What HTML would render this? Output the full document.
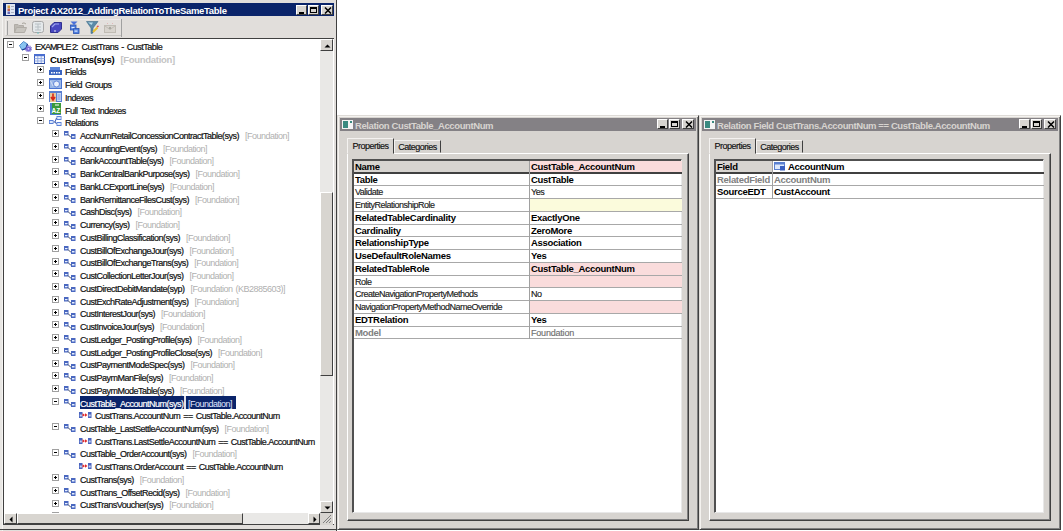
<!DOCTYPE html>
<html><head><meta charset="utf-8"><style>
*{margin:0;padding:0;box-sizing:border-box}
html,body{width:1063px;height:531px;overflow:hidden;background:#fff;position:relative;font-family:"Liberation Sans",sans-serif}
div,i{position:absolute}
i{display:block}
.lw{left:0;top:0;width:337px;height:531px;background:#e1dedb;border-right:1px solid #404040}
.lwl{left:0;top:0;width:3px;height:531px;background:#e8e6e3;box-shadow:inset -1px 0 0 #f4f3f1}
.lttl{left:3px;top:3px;width:331px;height:13px;background:#0a246a}
.lttxt{left:18px;top:3.5px;height:13px;line-height:13px;font-weight:bold;font-size:9.5px;letter-spacing:-0.3px;color:#fff;white-space:nowrap}
.tb{width:12px;height:10px;background:#d7d4d0;border:1px solid;border-color:#fff #404040 #404040 #fff}
.tbar{left:5px;top:19px;width:117px;height:17px;border:1px solid;border-color:#eeecea #b8b6b2 #c8c6c2 #eeecea;background:#e3e0dd}
.tree{left:3px;top:38px;width:331px;height:487px;background:#fff;border-left:1px solid #404040;border-top:1px solid #404040;border-bottom:1px solid #404040}
.tt{margin-top:1px;height:13px;line-height:13px;font-size:9px;letter-spacing:-0.5px;word-spacing:1px;color:#101010;-webkit-text-stroke:0.2px #101010;white-space:nowrap}
.tt.b{margin-top:0;font-size:9.5px;font-weight:bold;letter-spacing:-0.3px;color:#000;-webkit-text-stroke:0}
.tt.b .sf{font-weight:bold;letter-spacing:-0.3px;color:#c4c4c4}
.tt .sf{color:#b0b0b0;-webkit-text-stroke:0;font-weight:normal;letter-spacing:-0.5px;margin-left:6px}
.tt.sel .sf{margin-left:0}
.tt.sel{color:#fff;-webkit-text-stroke:0.2px #fff}
.tt.sel .sf{color:#e0e8ff}
.selbg{width:156px;height:12.6px;background:#0a246a;border-right:0}
.selsep{width:2px;height:12.6px;background:#e0e0e8}
.exp{width:7px;height:7px;border:1px solid #a0a0a0;background:#fff}
.exp .hz{left:1px;top:2px;width:3px;height:1px;background:#000}
.exp .vt{left:2px;top:1px;width:1px;height:3px;background:#000}
.ico{line-height:0}
.ico svg{display:block}
.sbv{left:320px;top:39px;width:13px;height:474px;background:#e9e8e6}
.sbh{left:4px;top:513px;width:316px;height:11px;background:#e9e8e6}
.sbtn{background:#d8d5d0;border:1px solid;border-color:#fff #404040 #404040 #fff}
.grip{left:320px;top:513px;width:13px;height:12px;background:#d7d4d0}
.win{background:#d7d4d0;border:1px solid;border-color:#dedbd7 #404040 #404040 #dedbd7;box-shadow:inset 1px 1px 0 #f4f2ef, inset -1px -1px 0 #808080}
.ttl{height:13px;background:#848185}
.ttxt{height:13px;line-height:13px;font-weight:bold;font-size:9.5px;letter-spacing:-0.4px;color:#d7d4d0;white-space:nowrap}
.wicon{line-height:0}
.panel{border:1px solid;border-color:#fff #404040 #404040 #fff;box-shadow:inset -1px -1px 0 #808080}
.tab{background:#d7d4d0;border:1px solid;border-color:#f4f2f0 #404040 transparent #f4f2f0;font-size:9px;letter-spacing:-0.5px;color:#101010;-webkit-text-stroke:0.15px #101010;text-align:center}
.tab span{position:absolute;left:0;right:0;top:0.5px;line-height:12px}
.tab:not(.act) span{top:0px}
.grid{background:#fff;border:1px solid;border-color:#505050 #e8e8e8 #e8e8e8 #505050;box-shadow:inset 1px 1px 0 #505050}
.gl{}
.gv{width:1px;background:#a0a0a0}
.gt{margin-top:1px;height:13px;line-height:13px;font-size:9px;letter-spacing:-0.5px;color:#202020;-webkit-text-stroke:0.15px #202020;white-space:nowrap}
.gt.b{margin-top:0;font-size:9.5px;font-weight:bold;letter-spacing:-0.3px;color:#000;-webkit-text-stroke:0}
.gt.gray{color:#808080;-webkit-text-stroke:0}
.gt.rg{margin-top:1px;font-size:9px;font-weight:normal;letter-spacing:-0.2px;color:#707070;-webkit-text-stroke:0.15px #707070}
</style></head><body>
<div class="lw"></div>
<div class="lwl"></div>
<div style="left:0;top:529px;width:337px;height:1px;background:#404040"></div>
<div class="lttl"></div>
<div class="wicon" style="left:6px;top:4px"><svg width="9" height="11" viewBox="0 0 9 11"><rect x="0" y="0" width="9" height="11" fill="#dfe6f2"/><rect x="1.5" y="1.5" width="2.5" height="2.5" fill="#d8a040"/><rect x="1.5" y="4.5" width="2.5" height="2.5" fill="#c06050"/><rect x="1.5" y="7.5" width="2.5" height="2.5" fill="#6a6ab8"/><path d="M5 2.5H8M5 5.5H8M5 8.5H8" stroke="#a8b0c0" stroke-width="1"/></svg></div>
<div class="lttxt">Project AX2012_AddingRelationToTheSameTable</div>
<div class="tb" style="left:296px;top:5px;width:11px"><i style="left:2px;top:6px;width:5px;height:2px;background:#000"></i></div><div class="tb" style="left:308px;top:5px;width:11px"><i style="left:1px;top:1px;width:7px;height:6px;border:1px solid #000;border-top-width:2px"></i></div><div class="tb" style="left:321px;top:5px;width:12px"><svg style="position:absolute;left:2px;top:1px" width="8" height="7" viewBox="0 0 8 7"><path d="M1 0.5L7 6.5M7 0.5L1 6.5" stroke="#000" stroke-width="1.5"/></svg></div>
<div class="tbar"></div>
<div style="left:7px;top:21px;width:1px;height:14px;background:#a0a0a0"></div>
<div class="ico" style="left:14px;top:22px"><svg width="13" height="11" viewBox="0 0 13 11"><path d="M0.5 2.5H4L5 3.5H9.5V10.5H0.5Z" fill="#bdb9b3" stroke="#b0aca6"/><path d="M2.5 5.5H12.5L10.5 10.5H0.5Z" fill="#c8c5bf" stroke="#b0aca6"/><path d="M8 1.5Q10 0 12 2" stroke="#a8a49c" fill="none"/></svg></div>
<div class="ico" style="left:32px;top:21px"><svg width="12" height="13" viewBox="0 0 12 13"><rect x="0.5" y="0.5" width="11" height="11" rx="2" fill="#e4e8ea" stroke="#a8a8a8"/><path d="M3 3H9M3 6H9M3 9H9M6 3V9" stroke="#b8c0c4"/><path d="M6 11V13" stroke="#70c0c0"/></svg></div>
<div class="ico" style="left:50px;top:22px"><svg width="12" height="11" viewBox="0 0 12 11"><path d="M0.5 4L4 0.5H11.5V7L8 10.5H0.5Z" fill="#4848c0" stroke="#303090"/><path d="M2 5L5 2H9" stroke="#a0a8f0" stroke-width="1.2" fill="none"/><circle cx="5" cy="9" r="0.8" fill="#fff"/></svg></div>
<div class="ico" style="left:70px;top:21px"><svg width="10" height="13" viewBox="0 0 10 13"><path d="M0.5 0.5H7.5L4 4Z" fill="#4a70d8"/><rect x="0.5" y="4" width="5.5" height="5" fill="#5080e0" stroke="#2a50b0" stroke-width="0.8"/><rect x="3.5" y="7.5" width="5.5" height="5" fill="#5080e0" stroke="#2a50b0" stroke-width="0.8"/><rect x="1.5" y="6" width="3" height="1.2" fill="#e0ecff"/><rect x="4.5" y="9.5" width="3" height="1.2" fill="#e0ecff"/></svg></div>
<div class="ico" style="left:86px;top:21px"><svg width="13" height="13" viewBox="0 0 13 13"><path d="M0.5 0.5H12L7 7V12L5 12.5V7Z" fill="#5a8aa8" stroke="#3a6a88" stroke-width="0.6"/><path d="M2 1.5H7L5.5 4Z" fill="#b8dcea"/><path d="M7 11L11.5 6.5" stroke="#e8c030" stroke-width="2"/><path d="M11 6L12.5 4.8" stroke="#e05050" stroke-width="1.6"/></svg></div>
<div class="ico" style="left:104px;top:22px"><svg width="12" height="11" viewBox="0 0 12 11"><rect x="0.5" y="3.5" width="11" height="7" fill="#d8d4ce" stroke="#c0bcb4"/><path d="M1 4L6 7.5L11 4" stroke="#c0bcb4" fill="none"/><circle cx="6" cy="6" r="1.2" fill="#a8a8a0"/><path d="M3 2L4 1M9 2L8 1" stroke="#e0b8b8"/></svg></div>
<div style="left:121px;top:19px;width:1px;height:18px;background:#a0a0a0"></div>

<div class="tree"></div>
<div style="left:0;top:0;width:320px;height:513px;overflow:hidden">
<div class="exp" style="left:7px;top:41.00px"><i class="hz"></i></div>
<div class="ico" style="left:19px;top:40.60px"><svg width="13" height="11" viewBox="0 0 13 11"><path d="M0.5 4.5L4.5 0.5L8.5 3L7 7.5L3 9Z" fill="#88c4f0" stroke="#3a78c0" stroke-width="0.8"/><path d="M3 9L7 7.5L8.5 3" stroke="#1a3a90" stroke-width="1.2" fill="none"/><circle cx="9.5" cy="7.8" r="2.6" fill="#7a6ad8"/><circle cx="9.5" cy="7.8" r="3.2" fill="none" stroke="#5a4ab8" stroke-width="1" stroke-dasharray="1 1"/><circle cx="9.5" cy="7.8" r="0.9" fill="#d8d0ff"/></svg></div>
<div class="tt" style="left:35px;top:39.80px"><span style="letter-spacing:-1px;word-spacing:0">EXAMPLE 2:</span><span style="margin-left:4px">CustTrans - CustTable</span></div>
<div class="exp" style="left:22px;top:53.74px"><i class="hz"></i></div>
<div class="ico" style="left:34px;top:54.04px"><svg width="11" height="10" viewBox="0 0 11 10"><rect x="0.5" y="0.5" width="10" height="9" fill="#f4f7fd" stroke="#3a5ab8"/><rect x="0" y="0" width="11" height="2.2" fill="#4a6ed0"/><path d="M3.8 2V9.5M7.2 2V9.5M0.5 4.6H10.5M0.5 7H10.5" stroke="#8aa4e0" stroke-width="0.9"/><rect x="0" y="9" width="11" height="1" fill="#2a4aa0"/></svg></div>
<div class="tt b" style="left:50px;top:52.54px">CustTrans(sys)<span class="sf">[Foundation]</span></div>
<div class="exp" style="left:37px;top:66.48px"><i class="hz"></i><i class="vt"></i></div>
<div class="ico" style="left:49px;top:66.98px"><svg width="13" height="8" viewBox="0 0 13 8"><rect x="1" y="0" width="10" height="3" fill="#5a84d8"/><rect x="0" y="3" width="13" height="5" fill="#3a64c0"/><rect x="2" y="5" width="1.5" height="1.5" fill="#fff"/><rect x="4.5" y="5" width="1.5" height="1.5" fill="#fff"/><rect x="7" y="5" width="1.5" height="1.5" fill="#fff"/><rect x="9.5" y="5" width="1.5" height="1.5" fill="#fff"/></svg></div>
<div class="tt" style="left:65px;top:65.28px">Fields</div>
<div class="exp" style="left:37px;top:79.22px"><i class="hz"></i><i class="vt"></i></div>
<div class="ico" style="left:49px;top:78.22px"><svg width="13" height="11" viewBox="0 0 13 11"><rect x="0" y="0" width="13" height="11" fill="#4a74d0"/><rect x="1" y="2" width="11" height="8" fill="#9ab8e8"/><circle cx="7.5" cy="6" r="3" fill="#e8f0fc" stroke="#4a74d0" stroke-width="0.8"/><path d="M1.5 3L4 8" stroke="#d0dcf4" stroke-width="1"/></svg></div>
<div class="tt" style="left:65px;top:78.02px">Field Groups</div>
<div class="exp" style="left:37px;top:91.96px"><i class="hz"></i><i class="vt"></i></div>
<div class="ico" style="left:49px;top:90.96px"><svg width="13" height="11" viewBox="0 0 13 11"><rect x="0" y="0" width="13" height="11" fill="#5a80d0"/><rect x="1" y="2" width="6" height="9" fill="#e8c898"/><path d="M4 2.5V8M2 6L4 9L6 6" stroke="#d82818" stroke-width="1.6" fill="none"/><rect x="8" y="2" width="4" height="8" fill="#c8d8f4"/><path d="M8.5 4H11.5M8.5 6H11.5M8.5 8H11.5" stroke="#6a8ad8" stroke-width="0.8"/></svg></div>
<div class="tt" style="left:65px;top:90.76px">Indexes</div>
<div class="exp" style="left:37px;top:104.70px"><i class="hz"></i><i class="vt"></i></div>
<div class="ico" style="left:50px;top:103.00px"><svg width="11" height="12" viewBox="0 0 11 12"><rect x="0" y="0" width="11" height="12" fill="#4a80d0"/><rect x="2" y="0" width="9" height="11" fill="#3a9a3a"/><text x="1.5" y="10" font-size="6.5" font-family="Liberation Sans" font-weight="bold" fill="#fff">AZ</text><rect x="5" y="1.5" width="4" height="1" fill="#fff"/></svg></div>
<div class="tt" style="left:65px;top:103.50px">Full Text Indexes</div>
<div class="exp" style="left:37px;top:117.44px"><i class="hz"></i></div>
<div class="ico" style="left:49px;top:116.04px"><svg width="13" height="10" viewBox="0 0 13 10"><rect x="0" y="4" width="4.5" height="4" fill="#5a80d8"/><rect x="0.8" y="5" width="3" height="2" fill="#dce8fc"/><rect x="7.5" y="0" width="5" height="4" fill="#5a80d8"/><rect x="8.3" y="1" width="3.4" height="2" fill="#dce8fc"/><rect x="7.5" y="6" width="5" height="4" fill="#5a80d8"/><rect x="8.3" y="7" width="3.4" height="2" fill="#dce8fc"/><path d="M4.5 6H6L7.5 2M6 6L7.5 8" stroke="#3a5ab0" fill="none"/></svg></div>
<div class="tt" style="left:65px;top:116.24px">Relations</div>
<div class="exp" style="left:52px;top:130.18px"><i class="hz"></i><i class="vt"></i></div>
<div class="ico" style="left:64px;top:131.38px"><svg width="12" height="8" viewBox="0 0 12 8"><rect x="0" y="0" width="4.5" height="4.5" fill="#4a68c0"/><rect x="1" y="2" width="2.5" height="1.2" fill="#e8f0ff"/><path d="M4 3.5L6.5 6H7" stroke="#303850" stroke-width="0.9" fill="none"/><rect x="7" y="3" width="4.5" height="5" fill="#4a68c0"/><rect x="8" y="5" width="2.5" height="1.5" fill="#e8f0ff"/></svg></div>
<div class="tt" style="left:80px;top:128.98px">AccNumRetailConcessionContractTable(sys)<span class="sf">[Foundation]</span></div>
<div class="exp" style="left:52px;top:142.92px"><i class="hz"></i><i class="vt"></i></div>
<div class="ico" style="left:64px;top:144.12px"><svg width="12" height="8" viewBox="0 0 12 8"><rect x="0" y="0" width="4.5" height="4.5" fill="#4a68c0"/><rect x="1" y="2" width="2.5" height="1.2" fill="#e8f0ff"/><path d="M4 3.5L6.5 6H7" stroke="#303850" stroke-width="0.9" fill="none"/><rect x="7" y="3" width="4.5" height="5" fill="#4a68c0"/><rect x="8" y="5" width="2.5" height="1.5" fill="#e8f0ff"/></svg></div>
<div class="tt" style="left:80px;top:141.72px">AccountingEvent(sys)<span class="sf">[Foundation]</span></div>
<div class="exp" style="left:52px;top:155.66px"><i class="hz"></i><i class="vt"></i></div>
<div class="ico" style="left:64px;top:156.86px"><svg width="12" height="8" viewBox="0 0 12 8"><rect x="0" y="0" width="4.5" height="4.5" fill="#4a68c0"/><rect x="1" y="2" width="2.5" height="1.2" fill="#e8f0ff"/><path d="M4 3.5L6.5 6H7" stroke="#303850" stroke-width="0.9" fill="none"/><rect x="7" y="3" width="4.5" height="5" fill="#4a68c0"/><rect x="8" y="5" width="2.5" height="1.5" fill="#e8f0ff"/></svg></div>
<div class="tt" style="left:80px;top:154.46px">BankAccountTable(sys)<span class="sf">[Foundation]</span></div>
<div class="exp" style="left:52px;top:168.40px"><i class="hz"></i><i class="vt"></i></div>
<div class="ico" style="left:64px;top:169.60px"><svg width="12" height="8" viewBox="0 0 12 8"><rect x="0" y="0" width="4.5" height="4.5" fill="#4a68c0"/><rect x="1" y="2" width="2.5" height="1.2" fill="#e8f0ff"/><path d="M4 3.5L6.5 6H7" stroke="#303850" stroke-width="0.9" fill="none"/><rect x="7" y="3" width="4.5" height="5" fill="#4a68c0"/><rect x="8" y="5" width="2.5" height="1.5" fill="#e8f0ff"/></svg></div>
<div class="tt" style="left:80px;top:167.20px">BankCentralBankPurpose(sys)<span class="sf">[Foundation]</span></div>
<div class="exp" style="left:52px;top:181.14px"><i class="hz"></i><i class="vt"></i></div>
<div class="ico" style="left:64px;top:182.34px"><svg width="12" height="8" viewBox="0 0 12 8"><rect x="0" y="0" width="4.5" height="4.5" fill="#4a68c0"/><rect x="1" y="2" width="2.5" height="1.2" fill="#e8f0ff"/><path d="M4 3.5L6.5 6H7" stroke="#303850" stroke-width="0.9" fill="none"/><rect x="7" y="3" width="4.5" height="5" fill="#4a68c0"/><rect x="8" y="5" width="2.5" height="1.5" fill="#e8f0ff"/></svg></div>
<div class="tt" style="left:80px;top:179.94px">BankLCExportLine(sys)<span class="sf">[Foundation]</span></div>
<div class="exp" style="left:52px;top:193.88px"><i class="hz"></i><i class="vt"></i></div>
<div class="ico" style="left:64px;top:195.08px"><svg width="12" height="8" viewBox="0 0 12 8"><rect x="0" y="0" width="4.5" height="4.5" fill="#4a68c0"/><rect x="1" y="2" width="2.5" height="1.2" fill="#e8f0ff"/><path d="M4 3.5L6.5 6H7" stroke="#303850" stroke-width="0.9" fill="none"/><rect x="7" y="3" width="4.5" height="5" fill="#4a68c0"/><rect x="8" y="5" width="2.5" height="1.5" fill="#e8f0ff"/></svg></div>
<div class="tt" style="left:80px;top:192.68px">BankRemittanceFilesCust(sys)<span class="sf">[Foundation]</span></div>
<div class="exp" style="left:52px;top:206.62px"><i class="hz"></i><i class="vt"></i></div>
<div class="ico" style="left:64px;top:207.82px"><svg width="12" height="8" viewBox="0 0 12 8"><rect x="0" y="0" width="4.5" height="4.5" fill="#4a68c0"/><rect x="1" y="2" width="2.5" height="1.2" fill="#e8f0ff"/><path d="M4 3.5L6.5 6H7" stroke="#303850" stroke-width="0.9" fill="none"/><rect x="7" y="3" width="4.5" height="5" fill="#4a68c0"/><rect x="8" y="5" width="2.5" height="1.5" fill="#e8f0ff"/></svg></div>
<div class="tt" style="left:80px;top:205.42px">CashDisc(sys)<span class="sf">[Foundation]</span></div>
<div class="exp" style="left:52px;top:219.36px"><i class="hz"></i><i class="vt"></i></div>
<div class="ico" style="left:64px;top:220.56px"><svg width="12" height="8" viewBox="0 0 12 8"><rect x="0" y="0" width="4.5" height="4.5" fill="#4a68c0"/><rect x="1" y="2" width="2.5" height="1.2" fill="#e8f0ff"/><path d="M4 3.5L6.5 6H7" stroke="#303850" stroke-width="0.9" fill="none"/><rect x="7" y="3" width="4.5" height="5" fill="#4a68c0"/><rect x="8" y="5" width="2.5" height="1.5" fill="#e8f0ff"/></svg></div>
<div class="tt" style="left:80px;top:218.16px">Currency(sys)<span class="sf">[Foundation]</span></div>
<div class="exp" style="left:52px;top:232.10px"><i class="hz"></i><i class="vt"></i></div>
<div class="ico" style="left:64px;top:233.30px"><svg width="12" height="8" viewBox="0 0 12 8"><rect x="0" y="0" width="4.5" height="4.5" fill="#4a68c0"/><rect x="1" y="2" width="2.5" height="1.2" fill="#e8f0ff"/><path d="M4 3.5L6.5 6H7" stroke="#303850" stroke-width="0.9" fill="none"/><rect x="7" y="3" width="4.5" height="5" fill="#4a68c0"/><rect x="8" y="5" width="2.5" height="1.5" fill="#e8f0ff"/></svg></div>
<div class="tt" style="left:80px;top:230.90px">CustBillingClassification(sys)<span class="sf">[Foundation]</span></div>
<div class="exp" style="left:52px;top:244.84px"><i class="hz"></i><i class="vt"></i></div>
<div class="ico" style="left:64px;top:246.04px"><svg width="12" height="8" viewBox="0 0 12 8"><rect x="0" y="0" width="4.5" height="4.5" fill="#4a68c0"/><rect x="1" y="2" width="2.5" height="1.2" fill="#e8f0ff"/><path d="M4 3.5L6.5 6H7" stroke="#303850" stroke-width="0.9" fill="none"/><rect x="7" y="3" width="4.5" height="5" fill="#4a68c0"/><rect x="8" y="5" width="2.5" height="1.5" fill="#e8f0ff"/></svg></div>
<div class="tt" style="left:80px;top:243.64px">CustBillOfExchangeJour(sys)<span class="sf">[Foundation]</span></div>
<div class="exp" style="left:52px;top:257.58px"><i class="hz"></i><i class="vt"></i></div>
<div class="ico" style="left:64px;top:258.78px"><svg width="12" height="8" viewBox="0 0 12 8"><rect x="0" y="0" width="4.5" height="4.5" fill="#4a68c0"/><rect x="1" y="2" width="2.5" height="1.2" fill="#e8f0ff"/><path d="M4 3.5L6.5 6H7" stroke="#303850" stroke-width="0.9" fill="none"/><rect x="7" y="3" width="4.5" height="5" fill="#4a68c0"/><rect x="8" y="5" width="2.5" height="1.5" fill="#e8f0ff"/></svg></div>
<div class="tt" style="left:80px;top:256.38px">CustBillOfExchangeTrans(sys)<span class="sf">[Foundation]</span></div>
<div class="exp" style="left:52px;top:270.32px"><i class="hz"></i><i class="vt"></i></div>
<div class="ico" style="left:64px;top:271.52px"><svg width="12" height="8" viewBox="0 0 12 8"><rect x="0" y="0" width="4.5" height="4.5" fill="#4a68c0"/><rect x="1" y="2" width="2.5" height="1.2" fill="#e8f0ff"/><path d="M4 3.5L6.5 6H7" stroke="#303850" stroke-width="0.9" fill="none"/><rect x="7" y="3" width="4.5" height="5" fill="#4a68c0"/><rect x="8" y="5" width="2.5" height="1.5" fill="#e8f0ff"/></svg></div>
<div class="tt" style="left:80px;top:269.12px">CustCollectionLetterJour(sys)<span class="sf">[Foundation]</span></div>
<div class="exp" style="left:52px;top:283.06px"><i class="hz"></i><i class="vt"></i></div>
<div class="ico" style="left:64px;top:284.26px"><svg width="12" height="8" viewBox="0 0 12 8"><rect x="0" y="0" width="4.5" height="4.5" fill="#4a68c0"/><rect x="1" y="2" width="2.5" height="1.2" fill="#e8f0ff"/><path d="M4 3.5L6.5 6H7" stroke="#303850" stroke-width="0.9" fill="none"/><rect x="7" y="3" width="4.5" height="5" fill="#4a68c0"/><rect x="8" y="5" width="2.5" height="1.5" fill="#e8f0ff"/></svg></div>
<div class="tt" style="left:80px;top:281.86px">CustDirectDebitMandate(syp)<span class="sf">[Foundation (KB2885603)]</span></div>
<div class="exp" style="left:52px;top:295.80px"><i class="hz"></i><i class="vt"></i></div>
<div class="ico" style="left:64px;top:297.00px"><svg width="12" height="8" viewBox="0 0 12 8"><rect x="0" y="0" width="4.5" height="4.5" fill="#4a68c0"/><rect x="1" y="2" width="2.5" height="1.2" fill="#e8f0ff"/><path d="M4 3.5L6.5 6H7" stroke="#303850" stroke-width="0.9" fill="none"/><rect x="7" y="3" width="4.5" height="5" fill="#4a68c0"/><rect x="8" y="5" width="2.5" height="1.5" fill="#e8f0ff"/></svg></div>
<div class="tt" style="left:80px;top:294.60px">CustExchRateAdjustment(sys)<span class="sf">[Foundation]</span></div>
<div class="exp" style="left:52px;top:308.54px"><i class="hz"></i><i class="vt"></i></div>
<div class="ico" style="left:64px;top:309.74px"><svg width="12" height="8" viewBox="0 0 12 8"><rect x="0" y="0" width="4.5" height="4.5" fill="#4a68c0"/><rect x="1" y="2" width="2.5" height="1.2" fill="#e8f0ff"/><path d="M4 3.5L6.5 6H7" stroke="#303850" stroke-width="0.9" fill="none"/><rect x="7" y="3" width="4.5" height="5" fill="#4a68c0"/><rect x="8" y="5" width="2.5" height="1.5" fill="#e8f0ff"/></svg></div>
<div class="tt" style="left:80px;top:307.34px">CustInterestJour(sys)<span class="sf">[Foundation]</span></div>
<div class="exp" style="left:52px;top:321.28px"><i class="hz"></i><i class="vt"></i></div>
<div class="ico" style="left:64px;top:322.48px"><svg width="12" height="8" viewBox="0 0 12 8"><rect x="0" y="0" width="4.5" height="4.5" fill="#4a68c0"/><rect x="1" y="2" width="2.5" height="1.2" fill="#e8f0ff"/><path d="M4 3.5L6.5 6H7" stroke="#303850" stroke-width="0.9" fill="none"/><rect x="7" y="3" width="4.5" height="5" fill="#4a68c0"/><rect x="8" y="5" width="2.5" height="1.5" fill="#e8f0ff"/></svg></div>
<div class="tt" style="left:80px;top:320.08px">CustInvoiceJour(sys)<span class="sf">[Foundation]</span></div>
<div class="exp" style="left:52px;top:334.02px"><i class="hz"></i><i class="vt"></i></div>
<div class="ico" style="left:64px;top:335.22px"><svg width="12" height="8" viewBox="0 0 12 8"><rect x="0" y="0" width="4.5" height="4.5" fill="#4a68c0"/><rect x="1" y="2" width="2.5" height="1.2" fill="#e8f0ff"/><path d="M4 3.5L6.5 6H7" stroke="#303850" stroke-width="0.9" fill="none"/><rect x="7" y="3" width="4.5" height="5" fill="#4a68c0"/><rect x="8" y="5" width="2.5" height="1.5" fill="#e8f0ff"/></svg></div>
<div class="tt" style="left:80px;top:332.82px">CustLedger_PostingProfile(sys)<span class="sf">[Foundation]</span></div>
<div class="exp" style="left:52px;top:346.76px"><i class="hz"></i><i class="vt"></i></div>
<div class="ico" style="left:64px;top:347.96px"><svg width="12" height="8" viewBox="0 0 12 8"><rect x="0" y="0" width="4.5" height="4.5" fill="#4a68c0"/><rect x="1" y="2" width="2.5" height="1.2" fill="#e8f0ff"/><path d="M4 3.5L6.5 6H7" stroke="#303850" stroke-width="0.9" fill="none"/><rect x="7" y="3" width="4.5" height="5" fill="#4a68c0"/><rect x="8" y="5" width="2.5" height="1.5" fill="#e8f0ff"/></svg></div>
<div class="tt" style="left:80px;top:345.56px">CustLedger_PostingProfileClose(sys)<span class="sf">[Foundation]</span></div>
<div class="exp" style="left:52px;top:359.50px"><i class="hz"></i><i class="vt"></i></div>
<div class="ico" style="left:64px;top:360.70px"><svg width="12" height="8" viewBox="0 0 12 8"><rect x="0" y="0" width="4.5" height="4.5" fill="#4a68c0"/><rect x="1" y="2" width="2.5" height="1.2" fill="#e8f0ff"/><path d="M4 3.5L6.5 6H7" stroke="#303850" stroke-width="0.9" fill="none"/><rect x="7" y="3" width="4.5" height="5" fill="#4a68c0"/><rect x="8" y="5" width="2.5" height="1.5" fill="#e8f0ff"/></svg></div>
<div class="tt" style="left:80px;top:358.30px">CustPaymentModeSpec(sys)<span class="sf">[Foundation]</span></div>
<div class="exp" style="left:52px;top:372.24px"><i class="hz"></i><i class="vt"></i></div>
<div class="ico" style="left:64px;top:373.44px"><svg width="12" height="8" viewBox="0 0 12 8"><rect x="0" y="0" width="4.5" height="4.5" fill="#4a68c0"/><rect x="1" y="2" width="2.5" height="1.2" fill="#e8f0ff"/><path d="M4 3.5L6.5 6H7" stroke="#303850" stroke-width="0.9" fill="none"/><rect x="7" y="3" width="4.5" height="5" fill="#4a68c0"/><rect x="8" y="5" width="2.5" height="1.5" fill="#e8f0ff"/></svg></div>
<div class="tt" style="left:80px;top:371.04px">CustPaymManFile(sys)<span class="sf">[Foundation]</span></div>
<div class="exp" style="left:52px;top:384.98px"><i class="hz"></i><i class="vt"></i></div>
<div class="ico" style="left:64px;top:386.18px"><svg width="12" height="8" viewBox="0 0 12 8"><rect x="0" y="0" width="4.5" height="4.5" fill="#4a68c0"/><rect x="1" y="2" width="2.5" height="1.2" fill="#e8f0ff"/><path d="M4 3.5L6.5 6H7" stroke="#303850" stroke-width="0.9" fill="none"/><rect x="7" y="3" width="4.5" height="5" fill="#4a68c0"/><rect x="8" y="5" width="2.5" height="1.5" fill="#e8f0ff"/></svg></div>
<div class="tt" style="left:80px;top:383.78px">CustPaymModeTable(sys)<span class="sf">[Foundation]</span></div>
<div class="exp" style="left:52px;top:397.72px"><i class="hz"></i></div>
<div class="ico" style="left:64px;top:398.92px"><svg width="12" height="8" viewBox="0 0 12 8"><rect x="0" y="0" width="4.5" height="4.5" fill="#4a68c0"/><rect x="1" y="2" width="2.5" height="1.2" fill="#e8f0ff"/><path d="M4 3.5L6.5 6H7" stroke="#303850" stroke-width="0.9" fill="none"/><rect x="7" y="3" width="4.5" height="5" fill="#4a68c0"/><rect x="8" y="5" width="2.5" height="1.5" fill="#e8f0ff"/></svg></div>
<div class="selbg" style="left:79.5px;top:396.02px"></div>
<div class="selsep" style="left:184px;top:396.02px"></div>
<div class="tt sel" style="left:80px;top:396.52px">CustTable_AccountNum(sys)</div>
<div class="tt sel" style="left:188px;top:396.52px"><span class="sf">[Foundation]</span></div>
<div class="ico" style="left:79px;top:412.36px"><svg width="13" height="6" viewBox="0 0 13 6"><rect x="0" y="0" width="3.5" height="6" fill="#4a64c0"/><rect x="0.8" y="2.5" width="2" height="2" fill="#c8d4f0"/><rect x="9" y="0" width="3.5" height="6" fill="#4a64c0"/><rect x="9.7" y="2.5" width="2" height="2" fill="#c8d4f0"/><path d="M3.5 1.2L6 3L3.5 4.8Z M6 1.2L8.5 3L6 4.8Z" fill="#e02828"/></svg></div>
<div class="tt" style="left:95px;top:409.26px">CustTrans.AccountNum == CustTable.AccountNum</div>
<div class="exp" style="left:52px;top:423.20px"><i class="hz"></i></div>
<div class="ico" style="left:64px;top:424.40px"><svg width="12" height="8" viewBox="0 0 12 8"><rect x="0" y="0" width="4.5" height="4.5" fill="#4a68c0"/><rect x="1" y="2" width="2.5" height="1.2" fill="#e8f0ff"/><path d="M4 3.5L6.5 6H7" stroke="#303850" stroke-width="0.9" fill="none"/><rect x="7" y="3" width="4.5" height="5" fill="#4a68c0"/><rect x="8" y="5" width="2.5" height="1.5" fill="#e8f0ff"/></svg></div>
<div class="tt" style="left:80px;top:422.00px">CustTable_LastSettleAccountNum(sys)<span class="sf">[Foundation]</span></div>
<div class="ico" style="left:79px;top:437.84px"><svg width="13" height="6" viewBox="0 0 13 6"><rect x="0" y="0" width="3.5" height="6" fill="#4a64c0"/><rect x="0.8" y="2.5" width="2" height="2" fill="#c8d4f0"/><rect x="9" y="0" width="3.5" height="6" fill="#4a64c0"/><rect x="9.7" y="2.5" width="2" height="2" fill="#c8d4f0"/><path d="M3.5 1.2L6 3L3.5 4.8Z M6 1.2L8.5 3L6 4.8Z" fill="#e02828"/></svg></div>
<div class="tt" style="left:95px;top:434.74px">CustTrans.LastSettleAccountNum == CustTable.AccountNum</div>
<div class="exp" style="left:52px;top:448.68px"><i class="hz"></i></div>
<div class="ico" style="left:64px;top:449.88px"><svg width="12" height="8" viewBox="0 0 12 8"><rect x="0" y="0" width="4.5" height="4.5" fill="#4a68c0"/><rect x="1" y="2" width="2.5" height="1.2" fill="#e8f0ff"/><path d="M4 3.5L6.5 6H7" stroke="#303850" stroke-width="0.9" fill="none"/><rect x="7" y="3" width="4.5" height="5" fill="#4a68c0"/><rect x="8" y="5" width="2.5" height="1.5" fill="#e8f0ff"/></svg></div>
<div class="tt" style="left:80px;top:447.48px">CustTable_OrderAccount(sys)<span class="sf">[Foundation]</span></div>
<div class="ico" style="left:79px;top:463.32px"><svg width="13" height="6" viewBox="0 0 13 6"><rect x="0" y="0" width="3.5" height="6" fill="#4a64c0"/><rect x="0.8" y="2.5" width="2" height="2" fill="#c8d4f0"/><rect x="9" y="0" width="3.5" height="6" fill="#4a64c0"/><rect x="9.7" y="2.5" width="2" height="2" fill="#c8d4f0"/><path d="M3.5 1.2L6 3L3.5 4.8Z M6 1.2L8.5 3L6 4.8Z" fill="#e02828"/></svg></div>
<div class="tt" style="left:95px;top:460.22px">CustTrans.OrderAccount == CustTable.AccountNum</div>
<div class="exp" style="left:52px;top:474.16px"><i class="hz"></i><i class="vt"></i></div>
<div class="ico" style="left:64px;top:475.36px"><svg width="12" height="8" viewBox="0 0 12 8"><rect x="0" y="0" width="4.5" height="4.5" fill="#4a68c0"/><rect x="1" y="2" width="2.5" height="1.2" fill="#e8f0ff"/><path d="M4 3.5L6.5 6H7" stroke="#303850" stroke-width="0.9" fill="none"/><rect x="7" y="3" width="4.5" height="5" fill="#4a68c0"/><rect x="8" y="5" width="2.5" height="1.5" fill="#e8f0ff"/></svg></div>
<div class="tt" style="left:80px;top:472.96px">CustTrans(sys)<span class="sf">[Foundation]</span></div>
<div class="exp" style="left:52px;top:486.90px"><i class="hz"></i><i class="vt"></i></div>
<div class="ico" style="left:64px;top:488.10px"><svg width="12" height="8" viewBox="0 0 12 8"><rect x="0" y="0" width="4.5" height="4.5" fill="#4a68c0"/><rect x="1" y="2" width="2.5" height="1.2" fill="#e8f0ff"/><path d="M4 3.5L6.5 6H7" stroke="#303850" stroke-width="0.9" fill="none"/><rect x="7" y="3" width="4.5" height="5" fill="#4a68c0"/><rect x="8" y="5" width="2.5" height="1.5" fill="#e8f0ff"/></svg></div>
<div class="tt" style="left:80px;top:485.70px">CustTrans_OffsetRecid(sys)<span class="sf">[Foundation]</span></div>
<div class="exp" style="left:52px;top:499.64px"><i class="hz"></i><i class="vt"></i></div>
<div class="ico" style="left:64px;top:500.84px"><svg width="12" height="8" viewBox="0 0 12 8"><rect x="0" y="0" width="4.5" height="4.5" fill="#4a68c0"/><rect x="1" y="2" width="2.5" height="1.2" fill="#e8f0ff"/><path d="M4 3.5L6.5 6H7" stroke="#303850" stroke-width="0.9" fill="none"/><rect x="7" y="3" width="4.5" height="5" fill="#4a68c0"/><rect x="8" y="5" width="2.5" height="1.5" fill="#e8f0ff"/></svg></div>
<div class="tt" style="left:80px;top:498.44px">CustTransVoucher(sys)<span class="sf">[Foundation]</span></div>
<div class="exp" style="left:52px;top:512.38px"><i class="hz"></i><i class="vt"></i></div>
<div class="ico" style="left:64px;top:513.58px"><svg width="12" height="8" viewBox="0 0 12 8"><rect x="0" y="0" width="4.5" height="4.5" fill="#4a68c0"/><rect x="1" y="2" width="2.5" height="1.2" fill="#e8f0ff"/><path d="M4 3.5L6.5 6H7" stroke="#303850" stroke-width="0.9" fill="none"/><rect x="7" y="3" width="4.5" height="5" fill="#4a68c0"/><rect x="8" y="5" width="2.5" height="1.5" fill="#e8f0ff"/></svg></div>
<div class="tt" style="left:80px;top:511.18px">CustTransX(sys)<span class="sf">[Foundation]</span></div>
</div>
<div class="sbv"></div>
<div class="sbtn" style="left:320px;top:39px;width:13px;height:12px"><svg style="position:absolute;left:2.5px;top:3.5px" width="7" height="4"><path d="M0.5 3.5H6.5L3.5 0.5Z" fill="#000"/></svg></div>
<div class="sbtn" style="left:320px;top:192px;width:13px;height:184px"></div>
<div class="sbtn" style="left:320px;top:501px;width:13px;height:12px"><svg style="position:absolute;left:2.5px;top:4px" width="7" height="4"><path d="M0.5 0.5H6.5L3.5 3.5Z" fill="#000"/></svg></div>
<div class="sbh"></div>
<div class="sbtn" style="left:4px;top:513px;width:13px;height:11px"><svg style="position:absolute;left:3.5px;top:2px" width="4" height="7"><path d="M3.5 0.5V6.5L0.5 3.5Z" fill="#000"/></svg></div>
<div class="sbtn" style="left:17px;top:513px;width:226px;height:11px"></div>
<div class="sbtn" style="left:308px;top:513px;width:12px;height:11px"><svg style="position:absolute;left:3.5px;top:2px" width="4" height="7"><path d="M0.5 0.5V6.5L3.5 3.5Z" fill="#000"/></svg></div>
<div class="grip"><svg style="position:absolute;left:2px;top:1px" width="10" height="10"><path d="M9 1L1 9M9 4L4 9M9 7L7 9" stroke="#808080" stroke-width="1"/></svg></div>
<div class="win" style="left:337px;top:115px;width:362px;height:415px"></div><div class="ttl" style="left:340px;top:118px;width:356px;"></div><div class="wicon" style="left:342px;top:120px"><svg width="11" height="9" viewBox="0 0 11 9"><rect x="0" y="0" width="11" height="9" fill="#f4f4f4"/><rect x="1" y="1" width="5" height="7" fill="#3a8a80"/><rect x="8" y="1" width="2" height="2" fill="#3a8a80"/></svg></div><div class="ttxt" style="left:355px;top:118.5px">Relation CustTable_AccountNum</div><div class="tb" style="left:657px;top:119px;width:11px"><i style="left:2px;top:6px;width:5px;height:2px;background:#000"></i></div><div class="tb" style="left:669px;top:119px;width:11px"><i style="left:1px;top:1px;width:7px;height:6px;border:1px solid #000;border-top-width:2px"></i></div><div class="tb" style="left:682px;top:119px;width:12px"><svg style="position:absolute;left:2px;top:1px" width="8" height="7" viewBox="0 0 8 7"><path d="M1 0.5L7 6.5M7 0.5L1 6.5" stroke="#000" stroke-width="1.5"/></svg></div><div class="panel" style="left:347px;top:153px;width:342px;height:368px"></div><div class="tab act" style="left:347px;top:138px;width:47px;height:16px"><span>Properties</span></div><div class="tab" style="left:394px;top:140px;width:47px;height:13px"><span>Categories</span></div><div class="grid" style="left:352px;top:159px;width:330px;height:354px"></div><div class="gc" style="left:354px;top:161.00px;width:175px;height:12.74px;background:#d7d4d0"></div><div class="gc" style="left:530px;top:161.00px;width:152px;height:12.74px;background:#fadcdc"></div><div class="gl" style="left:354px;top:171.74px;width:328px;height:2px;background:#404040"></div><div class="gt b" style="left:355px;top:160.00px">Name</div><div class="gt b" style="left:531px;top:160.00px">CustTable_AccountNum</div><div class="gl" style="left:354px;top:185.48px;width:328px;height:1px;background:#a8a8a8"></div><div class="gt b" style="left:355px;top:172.74px">Table</div><div class="gt b" style="left:531px;top:172.74px">CustTable</div><div class="gl" style="left:354px;top:198.22px;width:328px;height:1px;background:#a8a8a8"></div><div class="gt" style="left:355px;top:185.48px">Validate</div><div class="gt" style="left:531px;top:185.48px">Yes</div><div class="gc" style="left:530px;top:199.22px;width:152px;height:12.74px;background:#fbfbdc"></div><div class="gl" style="left:354px;top:210.96px;width:328px;height:1px;background:#a8a8a8"></div><div class="gt" style="left:355px;top:198.22px">EntityRelationshipRole</div><div class="gt" style="left:531px;top:198.22px"></div><div class="gl" style="left:354px;top:223.70px;width:328px;height:1px;background:#a8a8a8"></div><div class="gt b" style="left:355px;top:210.96px">RelatedTableCardinality</div><div class="gt b" style="left:531px;top:210.96px">ExactlyOne</div><div class="gl" style="left:354px;top:236.44px;width:328px;height:1px;background:#a8a8a8"></div><div class="gt b" style="left:355px;top:223.70px">Cardinality</div><div class="gt b" style="left:531px;top:223.70px">ZeroMore</div><div class="gl" style="left:354px;top:249.18px;width:328px;height:1px;background:#a8a8a8"></div><div class="gt b" style="left:355px;top:236.44px">RelationshipType</div><div class="gt b" style="left:531px;top:236.44px">Association</div><div class="gl" style="left:354px;top:261.92px;width:328px;height:1px;background:#a8a8a8"></div><div class="gt b" style="left:355px;top:249.18px">UseDefaultRoleNames</div><div class="gt b" style="left:531px;top:249.18px">Yes</div><div class="gc" style="left:530px;top:262.92px;width:152px;height:12.74px;background:#fadcdc"></div><div class="gl" style="left:354px;top:274.66px;width:328px;height:1px;background:#a8a8a8"></div><div class="gt b" style="left:355px;top:261.92px">RelatedTableRole</div><div class="gt b" style="left:531px;top:261.92px">CustTable_AccountNum</div><div class="gc" style="left:530px;top:275.66px;width:152px;height:12.74px;background:#fadcdc"></div><div class="gl" style="left:354px;top:287.40px;width:328px;height:1px;background:#a8a8a8"></div><div class="gt" style="left:355px;top:274.66px">Role</div><div class="gt" style="left:531px;top:274.66px"></div><div class="gl" style="left:354px;top:300.14px;width:328px;height:1px;background:#a8a8a8"></div><div class="gt" style="left:355px;top:287.40px">CreateNavigationPropertyMethods</div><div class="gt" style="left:531px;top:287.40px">No</div><div class="gc" style="left:530px;top:301.14px;width:152px;height:12.74px;background:#fadcdc"></div><div class="gl" style="left:354px;top:312.88px;width:328px;height:1px;background:#a8a8a8"></div><div class="gt" style="left:355px;top:300.14px">NavigationPropertyMethodNameOverride</div><div class="gt" style="left:531px;top:300.14px"></div><div class="gl" style="left:354px;top:325.62px;width:328px;height:1px;background:#a8a8a8"></div><div class="gt b" style="left:355px;top:312.88px">EDTRelation</div><div class="gt b" style="left:531px;top:312.88px">Yes</div><div class="gl" style="left:354px;top:338.36px;width:328px;height:1px;background:#a8a8a8"></div><div class="gt b gray" style="left:355px;top:325.62px">Model</div><div class="gt rg" style="left:531px;top:325.62px">Foundation</div><div class="gv" style="left:529px;top:161px;height:178.36px"></div>
<div class="win" style="left:699px;top:115px;width:362px;height:415px"></div><div class="ttl" style="left:702px;top:118px;width:356px;"></div><div class="wicon" style="left:704px;top:120px"><svg width="11" height="9" viewBox="0 0 11 9"><rect x="0" y="0" width="11" height="9" fill="#f4f4f4"/><rect x="1" y="1" width="5" height="7" fill="#3a8a80"/><rect x="8" y="1" width="2" height="2" fill="#3a8a80"/></svg></div><div class="ttxt" style="left:717px;top:118.5px">Relation Field CustTrans.AccountNum == CustTable.AccountNum</div><div class="tb" style="left:1019px;top:119px;width:11px"><i style="left:2px;top:6px;width:5px;height:2px;background:#000"></i></div><div class="tb" style="left:1031px;top:119px;width:11px"><i style="left:1px;top:1px;width:7px;height:6px;border:1px solid #000;border-top-width:2px"></i></div><div class="tb" style="left:1044px;top:119px;width:12px"><svg style="position:absolute;left:2px;top:1px" width="8" height="7" viewBox="0 0 8 7"><path d="M1 0.5L7 6.5M7 0.5L1 6.5" stroke="#000" stroke-width="1.5"/></svg></div><div class="panel" style="left:709px;top:153px;width:342px;height:368px"></div><div class="tab act" style="left:709px;top:138px;width:47px;height:16px"><span>Properties</span></div><div class="tab" style="left:756px;top:140px;width:47px;height:13px"><span>Categories</span></div><div class="grid" style="left:714px;top:159px;width:330px;height:354px"></div><div class="gc" style="left:716px;top:161.00px;width:56px;height:12.74px;background:#d7d4d0"></div><div class="gl" style="left:716px;top:171.74px;width:328px;height:2px;background:#404040"></div><div class="gt b" style="left:717px;top:160.00px">Field</div><div class="gt b" style="left:774px;top:160.00px"><svg style="vertical-align:-1px;margin-right:2px" width="12" height="9" viewBox="0 0 12 9"><rect x="0.5" y="0.5" width="10" height="7" fill="#dde8fa" stroke="#5a80d0"/><rect x="0.5" y="0.5" width="10" height="2" fill="#5a80d0"/><rect x="6" y="4" width="5" height="4.5" fill="#3a60c0"/></svg>AccountNum</div><div class="gl" style="left:716px;top:185.48px;width:328px;height:1px;background:#a8a8a8"></div><div class="gt b gray" style="left:717px;top:172.74px">RelatedField</div><div class="gt b gray" style="left:774px;top:172.74px">AccountNum</div><div class="gl" style="left:716px;top:198.22px;width:328px;height:1px;background:#a8a8a8"></div><div class="gt b" style="left:717px;top:185.48px">SourceEDT</div><div class="gt b" style="left:774px;top:185.48px">CustAccount</div><div class="gv" style="left:772px;top:161px;height:38.22px"></div>
</body></html>
